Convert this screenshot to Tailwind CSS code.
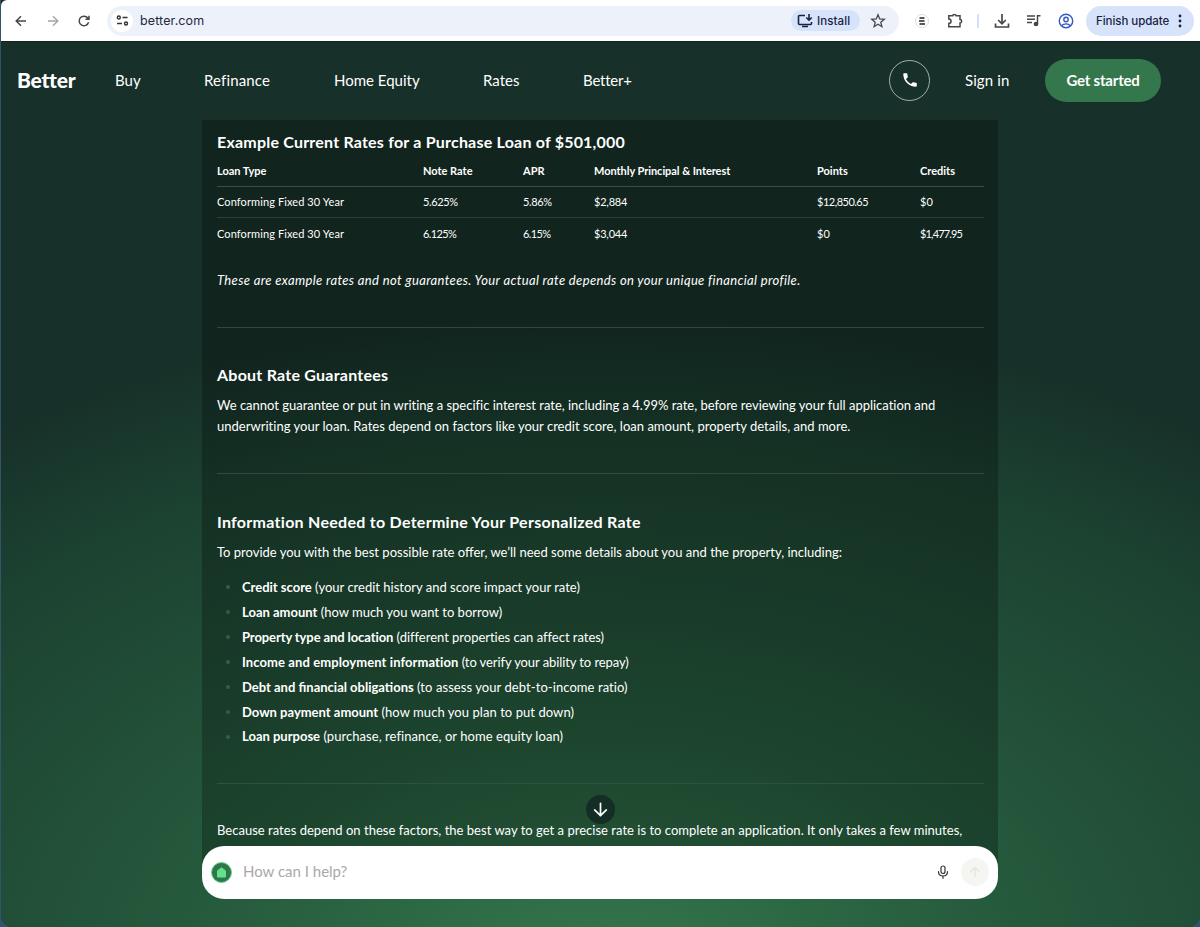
<!DOCTYPE html>
<html lang="en">

<head>
    <meta charset="utf-8">
    <script src="https://cdn.jsdelivr.net/npm/@tailwindcss/browser@4"></script>
    <title>Better</title>
</head>

<body class="w-[1200px] h-[927px] overflow-hidden bg-[#32546b] font-['Lato','Open_Sans',sans-serif]">
    <div class="ml-px w-[1199px] h-[927px] flex flex-col overflow-hidden rounded-b-xl bg-[#173029]">
        <!-- Browser toolbar -->
        <div class="h-[41px] shrink-0 bg-white flex items-center font-['Inter',sans-serif] text-[#1f2a44] rounded-tl-md">
            <svg class="ml-3 size-4" viewBox="0 0 16 16" fill="none" stroke="#474747" stroke-width="1.5"><path d="M13 8H3.5M8 3.2L3.2 8L8 12.8" /></svg>
            <svg class="ml-4 size-4" viewBox="0 0 16 16" fill="none" stroke="#a5a5a5" stroke-width="1.4"><path d="M3 8H12.5M8 3.2L12.8 8L8 12.8" /></svg>
            <svg class="ml-[15px] size-4" viewBox="0 0 16 16" fill="none" stroke="#474747" stroke-width="1.5"><path d="M12.6 9.3A4.8 4.8 0 1 1 11.8 5L13 6.3M13 2.8V6.3H9.5" /></svg>
            <div class="ml-[15px] w-[792px] h-[30px] rounded-full bg-[#edf2fa] flex items-center">
                <div class="ml-1 size-[22px] rounded-full bg-white flex items-center justify-center">
                    <svg class="size-[13px]" viewBox="0 0 13 13" fill="none" stroke="#333" stroke-width="1.4"><circle cx="2.8" cy="3.5" r="1.5" /><path d="M6.5 3.5H11.5M1 9.5H6" /><circle cx="10" cy="9.5" r="1.5" /></svg>
                </div>
                <span class="ml-[7px] pt-px text-[12.5px] tracking-[0.12px]">better.com</span>
                <div class="ml-auto w-[69px] h-[21px] rounded-full bg-[#d7e3fb] flex items-center text-[#172343]">
                    <svg class="ml-[6px] size-[16px]" viewBox="0 0 16 16" fill="none" stroke="#172343" stroke-width="1.6"><path d="M8 2.5H2.5A1 1 0 0 0 1.5 3.5V10.5A1 1 0 0 0 2.5 11.5H13.5A1 1 0 0 0 14.5 10.5V9M5 13.5H11M12 1V7M9.3 4.5L12 7.2L14.7 4.5" /></svg>
                    <span class="ml-[4px] pt-[2px] text-[11.5px] font-medium tracking-[0.1px]">Install</span>
                </div>
                <svg class="ml-[10px] mr-[13px] size-4" viewBox="0 0 16 16" fill="none" stroke="#474747" stroke-width="1.3"><path d="M8 1.8L9.7 6L14.3 6.3L10.8 9.3L11.9 13.7L8 11.3L4.1 13.7L5.2 9.3L1.7 6.3L6.3 6Z" /></svg>
            </div>
            <div class="ml-4 size-[14px] rounded-full border border-[#ddd] flex items-center justify-center">
                <svg class="w-[6px] h-2" viewBox="0 0 6 8" stroke="#222" stroke-width="1.5"><path d="M0.5 1H5.5M0 4H5.5M0.5 7H6" /></svg>
            </div>
            <svg class="ml-[18px] size-4" viewBox="0 0 16 16" fill="none" stroke="#474747" stroke-width="1.5"><path d="M1.8 2.8H5.7A1.7 1.4 0 0 1 9.1 2.8H13V6.5A1.7 1.7 0 0 1 13 9.9V13.7H1.8V10.5A2.2 2.2 0 0 0 1.8 6Z" /></svg>
            <div class="ml-[14px] w-[2px] h-[14px] bg-[#d3e0f8]"></div>
            <svg class="ml-[15px] size-4" viewBox="0 0 16 16" fill="none" stroke="#474747" stroke-width="1.7"><path d="M8 1V10.5M4.2 7L8 10.8L11.8 7M1.5 10.5V14H14.5V10.5" /></svg>
            <svg class="ml-4 size-4" viewBox="0 0 16 16" fill="none" stroke="#474747" stroke-width="1.5"><path d="M1 3H9M1 6.2H9M1 9.4H6M11.5 11V2.8H14.5" /><circle cx="10" cy="11" r="1.6" fill="#474747" /></svg>
            <svg class="ml-4 size-4" viewBox="0 0 16 16" fill="none" stroke="#3458c4" stroke-width="1.4"><circle cx="8" cy="8" r="6.7" /><circle cx="8" cy="6.5" r="2.2" /><path d="M3.5 12.8C5.8 10.2 10.2 10.2 12.5 12.8" /></svg>
            <div class="ml-[12px] w-[108px] h-[30px] rounded-full bg-[#d7e3fb] flex items-center text-[#172343]">
                <span class="ml-[10px] pt-[2px] whitespace-nowrap text-[11.5px] tracking-[-0.05px] font-medium">Finish update</span>
                <svg class="ml-auto mr-[12px] w-1 h-4" viewBox="0 0 4 16" fill="#172343"><circle cx="2" cy="3" r="1.4" /><circle cx="2" cy="8" r="1.4" /><circle cx="2" cy="13" r="1.4" /></svg>
            </div>
        </div>

        <!-- Page -->
        <div class="flex-1 flex flex-col border-t border-[#0f241e] text-white bg-[radial-gradient(ellipse_1050px_665px_at_50%_105%,#34774d_0%,#265b3d_38%,#214e37_58%,#1c4231_80%,#173029_100%)]">
            <div class="h-[78px] pb-[2px] shrink-0 flex items-center text-[15px]">
                <span class="ml-[16px] w-[98px] text-[21px] font-black tracking-[-0.25px]">Better</span>
                <span class="w-[89px]">Buy</span>
                <span class="w-[130px] tracking-[0.15px]">Refinance</span>
                <span class="w-[149px]">Home Equity</span>
                <span class="w-[100px]">Rates</span>
                <span class="tracking-[-0.2px]">Better+</span>
                <div class="ml-auto size-[41px] rounded-full border border-white/60 flex items-center justify-center">
                    <svg class="size-[18px]" viewBox="0 0 24 24" fill="#fff"><path d="M6.6 10.8c1.4 2.8 3.8 5.1 6.6 6.6l2.2-2.2c.3-.3.7-.4 1-.2 1.1.4 2.3.6 3.6.6.6 0 1 .4 1 1V20c0 .6-.4 1-1 1C10.6 21 3 13.4 3 4c0-.6.5-1 1-1h3.5c.6 0 1 .4 1 1 0 1.3.2 2.5.6 3.6.1.3 0 .7-.2 1z" /></svg>
                </div>
                <span class="ml-[35px] w-[80px] tracking-[0.1px]">Sign in</span>
                <div class="mr-[39px] w-[116px] h-[43px] rounded-full bg-[#34774d] flex items-center justify-center font-bold tracking-[-0.2px]">Get started</div>
            </div>

            <!-- Chat -->
            <div class="ml-[201px] w-[796px] h-[779px] relative">
                <div class="h-[750px] pl-[15px] pr-[14px] pt-[11px] bg-black/25 text-[13px] leading-[21px] whitespace-nowrap">
                    <h3 class="text-[16px] leading-[21px] font-bold tracking-[0.21px]">Example Current Rates for a Purchase Loan of $501,000</h3>
                    <div class="mt-[3px] text-[11px]">
                        <div class="h-[32px] grid grid-cols-[206px_100px_71px_223px_103px_1fr] items-center font-bold border-b border-[#3b4f49]">
                            <span>Loan Type</span><span>Note Rate</span><span>APR</span><span class="tracking-[-0.05px]">Monthly Principal &amp; Interest</span><span>Points</span><span>Credits</span>
                        </div>
                        <div class="h-[31px] pb-px grid grid-cols-[206px_100px_71px_223px_103px_1fr] items-center border-b border-[#2b403a]">
                            <span class="tracking-[0.1px]">Conforming Fixed 30 Year</span><span class="tracking-[-0.35px]">5.625%</span><span class="tracking-[-0.35px]">5.86%</span><span class="tracking-[-0.2px]">$2,884</span><span class="tracking-[-0.5px]">$12,850.65</span><span>$0</span>
                        </div>
                        <div class="h-[31px] pb-px grid grid-cols-[206px_100px_71px_223px_103px_1fr] items-center">
                            <span class="tracking-[0.1px]">Conforming Fixed 30 Year</span><span class="tracking-[-0.6px]">6.125%</span><span class="tracking-[-0.6px]">6.15%</span><span class="tracking-[-0.2px]">$3,044</span><span>$0</span><span class="tracking-[-0.85px]">$1,477.95</span>
                        </div>
                    </div>
                    <p class="mt-[21px] italic tracking-[0.355px]">These are example rates and not guarantees. Your actual rate depends on your unique financial profile.</p>
                    <hr class="mt-[36px] border-[#33453f]">
                    <h3 class="mt-[36px] text-[16px] leading-[21px] font-bold tracking-[0.24px]">About Rate Guarantees</h3>
                    <p class="mt-[10px] tracking-[-0.01px]">We cannot guarantee or put in writing a specific interest rate, including a 4.99% rate, before reviewing your full application and</p>
                    <p class="tracking-[0.02px]">underwriting your loan. Rates depend on factors like your credit score, loan amount, property details, and more.</p>
                    <hr class="mt-[36px] border-[#33483f]">
                    <h3 class="mt-[37px] text-[16px] leading-[21px] font-bold tracking-[0.28px]">Information Needed to Determine Your Personalized Rate</h3>
                    <p class="mt-[10px]">To provide you with the best possible rate offer, we’ll need some details about you and the property, including:</p>
                    <ul class="mt-[12px] leading-[24.9px]">
                        <li class="flex items-center gap-[12px]"><i class="ml-[9px] size-[4px] rounded-full bg-[#3d584d]"></i><span><b>Credit score</b> (your credit history and score impact your rate)</span></li>
                        <li class="flex items-center gap-[12px]"><i class="ml-[9px] size-[4px] rounded-full bg-[#3d584d]"></i><span><b>Loan amount</b> (how much you want to borrow)</span></li>
                        <li class="flex items-center gap-[12px]"><i class="ml-[9px] size-[4px] rounded-full bg-[#3d584d]"></i><span><b class="tracking-[-0.1px]">Property type and location</b> <span class="tracking-[-0.02px]">(different properties can affect rates)</span></span></li>
                        <li class="flex items-center gap-[12px]"><i class="ml-[9px] size-[4px] rounded-full bg-[#3d584d]"></i><span><b class="tracking-[0.09px]">Income and employment information</b> <span class="tracking-[-0.09px]">(to verify your ability to repay)</span></span></li>
                        <li class="flex items-center gap-[12px]"><i class="ml-[9px] size-[4px] rounded-full bg-[#3d584d]"></i><span><b>Debt and financial obligations</b> <span class="tracking-[0.07px]">(to assess your debt-to-income ratio)</span></span></li>
                        <li class="flex items-center gap-[12px]"><i class="ml-[9px] size-[4px] rounded-full bg-[#3d584d]"></i><span><b>Down payment amount</b> <span class="tracking-[0.06px]">(how much you plan to put down)</span></span></li>
                        <li class="flex items-center gap-[12px]"><i class="ml-[9px] size-[4px] rounded-full bg-[#3d584d]"></i><span><b>Loan purpose</b> <span class="tracking-[0.06px]">(purchase, refinance, or home equity loan)</span></span></li>
                    </ul>
                    <hr class="mt-[34px] border-[#31503f]">
                    <p class="mt-[36px] tracking-[0.02px]">Because rates depend on these factors, the best way to get a precise rate is to complete an application. It only takes a few minutes,</p>
                </div>

                <!-- Scroll to latest -->
                <div class="absolute left-[384px] top-[675px] size-[29px] rounded-full bg-[#142e26] flex items-center justify-center">
                    <svg class="size-[17px]" viewBox="0 0 18 18" fill="none" stroke="#fff" stroke-width="1.8" stroke-linecap="round" stroke-linejoin="round"><path d="M9 2.5V15.5M2.8 9.5L9 15.5L15.2 9.5" /></svg>
                </div>

                <div class="absolute left-0 bottom-[0.5px] w-full h-[53px] rounded-[22px] bg-white flex items-center">
                    <div class="ml-[9px] size-[21px] rounded-full bg-[#2f774b] border border-[#65d58c] flex items-center justify-center">
                        <svg class="size-[11px]" viewBox="0 0 11 11" fill="#64df8b"><path d="M5.5 0.8L9.5 3.8V10H1.5V3.8Z" stroke="#64df8b" stroke-linejoin="round" /></svg>
                    </div>
                    <span class="ml-[11px] pb-px text-[15px] text-[#a9a9a9]">How can I help?</span>
                    <svg class="ml-auto w-[12px] h-[14px]" viewBox="0 0 12 14" fill="none" stroke="#333" stroke-width="1.2" stroke-linecap="round"><rect x="4" y="1" width="4" height="7.5" rx="2" /><path d="M1.5 6.5C1.5 12.5 10.5 12.5 10.5 6.5M6 11V13.3" /></svg>
                    <div class="ml-[12px] mr-[9px] size-[28px] rounded-full bg-[#f5f5f2] flex items-center justify-center">
                        <svg class="size-[12px]" viewBox="0 0 12 12" fill="none" stroke="#e2e5df" stroke-width="1.2"><path d="M6 11V1.5M1.5 6L6 1.5L10.5 6" /></svg>
                    </div>
                </div>
            </div>
        </div>
    </div>
</body>

</html>
